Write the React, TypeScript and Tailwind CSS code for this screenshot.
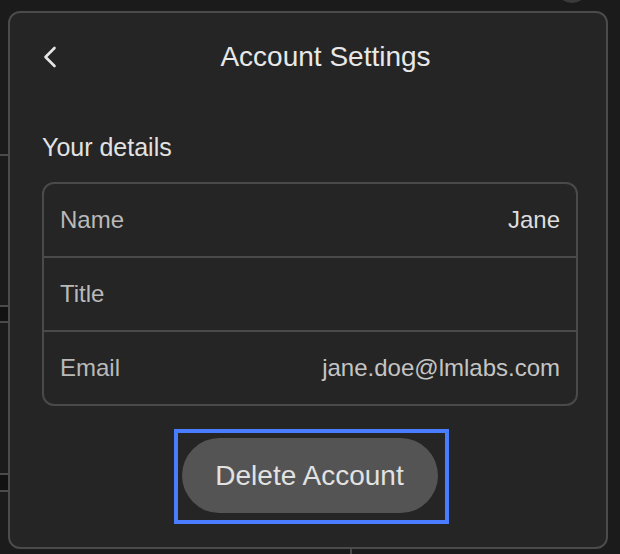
import React from 'react';

// 계정 설정 패널 – 어두운 배경 위에 떠 있는 팝업
const rows = [
  { label: 'Name', value: 'Jane', valueClass: 'text-[#dedede]' },
  { label: 'Title', value: '', valueClass: '' },
  { label: 'Email', value: 'jane.doe@lmlabs.com', valueClass: 'text-[#c4c4c4]' },
];

const App: React.FC = () => {
  return (
    <div
      className="relative w-[620px] h-[554px] overflow-hidden bg-[#1b1b1b]"
      style={{ fontFamily: '"Liberation Sans", Arial, sans-serif' }}
    >
      {/* 뒤쪽 앱 화면의 흔적 */}
      <div className="absolute left-0 top-[154px] w-[8px] h-[2px] bg-[#4a4a4a]" />
      <div className="absolute left-0 top-[305px] w-[8px] h-[18px] border-y-2 border-[#4a4a4a] bg-[#121212]" />
      <div className="absolute left-0 top-[473px] w-[8px] h-[19px] border-y-2 border-[#4a4a4a] bg-[#121212]" />
      <div className="absolute left-[350px] top-[546px] w-[2px] h-[10px] bg-[#4a4a4a]" />
      <div className="absolute left-[556px] top-[-30px] w-[32px] h-[33px] rounded-full bg-[#3a3a3a]" />

      {/* 패널 */}
      <div className="relative ml-[8px] mt-[11px] w-[600px] h-[538px] rounded-[12px] border-2 border-[#4b4b4b] bg-[#252525] pl-[32px] pr-[28px]">
        {/* 헤더 */}
        <div className="h-[84px] pt-[3px] flex items-center">
          <button className="ml-[1px] text-[#e6e6e6]">
            <svg width="14" height="22" viewBox="0 0 14 22" fill="none" className="block">
              <polyline
                points="11.5,2 2.5,11 11.5,20"
                stroke="currentColor"
                strokeWidth="2.6"
                strokeLinecap="round"
                strokeLinejoin="round"
              />
            </svg>
          </button>
          <h1 className="flex-1 pl-[16px] text-center text-[28px] leading-[32px] text-[#e8e8e8]">
            Account Settings
          </h1>
        </div>

        {/* 내 정보 */}
        <div className="mt-[35px] text-[25px] leading-[30px] text-[#e2e2e2]">Your details</div>

        <div className="mt-[20px] rounded-[12px] border-2 border-[#4a4a4a]">
          {rows.map((row, i) => (
            <div
              key={row.label}
              className={
                'flex items-center justify-between px-[16px] text-[24px] ' +
                (i > 0 ? 'h-[74px] border-t-2 border-[#4a4a4a]' : 'h-[72px]')
              }
            >
              <span className="text-[#b9b9b9]">{row.label}</span>
              <span className={row.valueClass}>{row.value}</span>
            </div>
          ))}
        </div>

        {/* 계정 삭제 버튼 (포커스 표시) */}
        <div className="mt-[23px] flex justify-center">
          <div className="ml-[2px] border-4 border-[#4a7cff] pt-[5px] pl-[4px] pr-[7px] pb-[7px]">
            <button className="block w-[256px] h-[75px] rounded-full bg-[#545454] text-[28px] text-[#e2e2e2]">
              Delete Account
            </button>
          </div>
        </div>
      </div>
    </div>
  );
};

export default App;
